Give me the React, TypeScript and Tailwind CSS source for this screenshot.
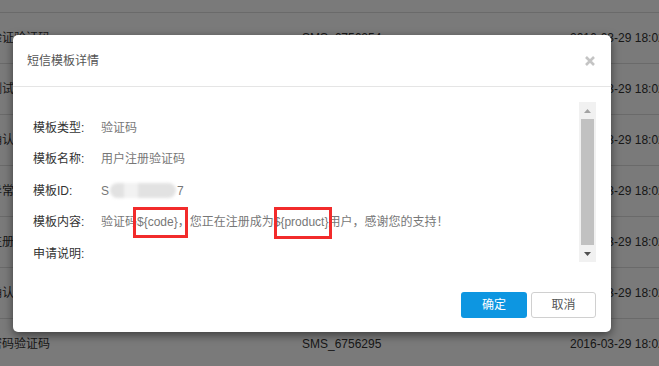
const rows = [
  { name: "身份验证验证码", code: "SMS_6756254", time: "2016-03-29 18:02:11" },
  { name: "短信测试", code: "SMS_6756253", time: "2016-03-29 18:02:11" },
  { name: "登录确认验证码", code: "SMS_6756252", time: "2016-03-29 18:02:11" },
  { name: "登录异常验证码", code: "SMS_6756251", time: "2016-03-29 18:02:11" },
  { name: "用户注册验证码", code: "SMS_6756250", time: "2016-03-29 18:02:11" },
  { name: "活动确认验证码", code: "SMS_6756297", time: "2016-03-29 18:02:11" },
  { name: "修改密码验证码", code: "SMS_6756295", time: "2016-03-29 18:02:11" },
];

const font = "font-['Liberation_Sans','Noto_Sans_CJK_SC',sans-serif]";

function Field({ label, children }: { label: string; children?: React.ReactNode }) {
  return (
    <div className="flex h-[31.5px] items-center">
      <span className="w-[68px] shrink-0 text-[12px] leading-[16px] text-[#333]">{label}</span>
      <span className="text-[12px] leading-[16px] text-[#777]">{children}</span>
    </div>
  );
}

function Scrollbar() {
  return (
    <div className="flex w-[17px] shrink-0 flex-col items-center bg-[#f1f1f1]">
      <div className="flex h-[17px] items-center justify-center">
        <svg width="7" height="4" viewBox="0 0 7 4">
          <path d="M0 4 L3.5 0 L7 4 Z" fill="#a3a3a3" />
        </svg>
      </div>
      <div className="w-[13px] flex-1 bg-[#c1c1c1]" />
      <div className="flex h-[17px] items-center justify-center">
        <svg width="7" height="4" viewBox="0 0 7 4">
          <path d="M0 0 L7 0 L3.5 4 Z" fill="#505050" />
        </svg>
      </div>
    </div>
  );
}

export default function App() {
  return (
    <div className={`relative h-[366px] w-[659px] overflow-hidden bg-white ${font}`}>
      <div className="flex flex-col">
        <div className="h-[13px] border-b border-[#ddd]" />
        {rows.map((r) => (
          <div key={r.code} className="flex h-[51px] items-center border-b border-[#ddd] text-[12px] text-[#333]">
            <span className="ml-[-34px] w-[336px] shrink-0 whitespace-nowrap">{r.name}</span>
            <span className="w-[268px] shrink-0">{r.code}</span>
            <span className="whitespace-nowrap">{r.time}</span>
          </div>
        ))}
      </div>
      <div className="absolute inset-0 bg-black/[0.52]" />

      <div className="absolute left-[13px] top-[35px] flex h-[297px] w-[598px] flex-col rounded-[5px] bg-white shadow-[0_3px_10px_rgba(0,0,0,0.5)]">
        <div className="flex h-[52px] items-center justify-between border-b border-[#e5e5e5] pl-[14px] pr-[16px]">
          <span className="text-[12px] text-[#555]">短信模板详情</span>
          <svg width="10" height="10" viewBox="0 0 10 10">
            <path d="M1 1 L9 9 M9 1 L1 9" stroke="#c4c4c4" strokeWidth="2.6" />
          </svg>
        </div>

        <div className="pl-[20px] pr-[15px] pt-[15px]">
          <div className="flex h-[160px]">
            <div className="flex-1 pt-[10px]">
              <Field label="模板类型:">验证码</Field>
              <Field label="模板名称:">用户注册验证码</Field>
              <Field label="模板ID:">
                <span className="inline-flex items-center">
                  <span>S</span>
                  <span className="relative mx-[1px] inline-block h-[15px] w-[66px] rounded-full bg-[#e2e2e2] blur-[1.5px]">
                    <span className="absolute left-[14px] top-0 h-full w-[14px] bg-[#f2f2f2]" />
                  </span>
                  <span>7</span>
                </span>
              </Field>
              <Field label="模板内容:">
                <span className="relative whitespace-nowrap">
                  验证码${"{code}"}，您正在注册成为${"{product}"}用户，感谢您的支持！
                  <span className="absolute left-[32px] top-[-8px] h-[31px] w-[55px] border-[3px] border-[#f22b2b]" />
                  <span className="absolute left-[173px] top-[-8px] h-[32px] w-[58px] border-[3px] border-[#f22b2b]" />
                </span>
              </Field>
              <Field label="申请说明:" />
            </div>
            <Scrollbar />
          </div>
        </div>

        <div className="flex justify-end gap-[4px] pr-[15px] pt-[30px]">
          <button className="h-[26px] w-[66px] rounded-[3px] bg-[#0d96e1] text-[12px] text-white">确定</button>
          <button className="h-[26px] w-[65px] rounded-[3px] border border-[#d0d0d0] bg-white text-[12px] text-[#555]">取消</button>
        </div>
      </div>
    </div>
  );
}
